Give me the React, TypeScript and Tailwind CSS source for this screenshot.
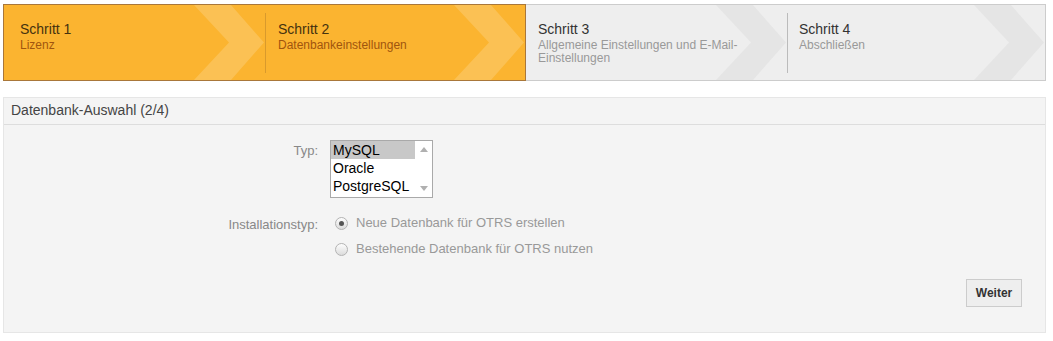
import React from "react";

type Step = {
  title: string;
  sub: string;
  active: boolean;
  width: string;
  border: string;
  pad: string;
  sep: boolean;
};

const steps: Step[] = [
  { title: "Schritt 1", sub: "Lizenz", active: true, width: "w-[262px]", border: "border-y border-l border-[#a9773a]", pad: "pl-[16px]", sep: false },
  { title: "Schritt 2", sub: "Datenbankeinstellungen", active: true, width: "w-[261px]", border: "border-y border-r border-[#a9773a]", pad: "pl-[12px]", sep: true },
  { title: "Schritt 3", sub: "Allgemeine Einstellungen und E-Mail-Einstellungen", active: false, width: "w-[261px]", border: "border-y border-[#cccccc]", pad: "pl-[12px]", sep: false },
  { title: "Schritt 4", sub: "Abschließen", active: false, width: "w-[259px]", border: "border-y border-r border-[#cccccc]", pad: "pl-[11px]", sep: true },
];

function Chevron({ fill }: { fill: string }) {
  return (
    <svg
      className="absolute right-0 top-0 h-full w-[71px]"
      viewBox="0 0 71 75"
      preserveAspectRatio="none"
    >
      <polygon points="0,0 37,0 70,37.5 37,75 0,75 35,37.5" fill={fill} />
    </svg>
  );
}

function StepItem({ step }: { step: Step }) {
  return (
    <div
      className={`relative h-[77px] shrink-0 ${step.width} ${step.border} ${
        step.active ? "bg-[#fbb430]" : "bg-[#eeeeee]"
      }`}
    >
      <Chevron fill={step.active ? "#fbc154" : "#e5e5e5"} />
      <div
        className={`relative mt-[8px] h-[60px] ${step.pad} pt-[8px] ${
          step.sep
            ? step.active
              ? "border-l border-[#d99a2c]"
              : "border-l border-[#bbbbbb]"
            : ""
        }`}
      >
        <div
          className={`text-[14px] leading-[17px] ${
            step.active ? "text-[#45320f]" : "text-[#333333]"
          }`}
        >
          {step.title}
        </div>
        <div
          className={`mt-[1px] w-[215px] text-[12px] leading-[13px] ${
            step.active ? "text-[#a0550e]" : "text-[#999999]"
          }`}
        >
          {step.sub}
        </div>
      </div>
    </div>
  );
}

function Radio({ checked }: { checked: boolean }) {
  return (
    <span className="flex h-[13px] w-[13px] items-center justify-center rounded-full border border-[#b3b3b3] bg-gradient-to-b from-[#fdfdfd] to-[#dcdcdc]">
      {checked && <span className="h-[5px] w-[5px] rounded-full bg-[#555555]" />}
    </span>
  );
}

export default function App() {
  const options = ["MySQL", "Oracle", "PostgreSQL"];
  return (
    <div
      className="min-h-[341px] bg-white pt-[4px] pl-[3px]"
      style={{ fontFamily: '"Liberation Sans", Arial, sans-serif' }}
    >
      <div className="flex w-[1043px]">
        {steps.map((s) => (
          <StepItem key={s.title} step={s} />
        ))}
      </div>

      <div className="mt-[16px] h-[236px] w-[1043px] border border-[#e6e6e6] bg-[#f4f4f4]">
        <div className="h-[27px] border-b border-[#dddddd] pl-[7px] pt-[4px] text-[14px] leading-[17px] text-[#444444]">
          Datenbank-Auswahl (2/4)
        </div>

        <div className="grid grid-cols-[314px_1fr] gap-x-[12px] pt-[15px]">
          <div className="pt-[3px] text-right text-[13px] leading-[16px] text-[#888888]">
            Typ:
          </div>
          <div className="flex h-[58px] w-[103px] border border-[#a9a9a9] bg-white">
            <div className="flex-1">
              {options.map((o, i) => (
                <div
                  key={o}
                  className={`h-[18px] pl-[2px] text-[14px] leading-[18px] text-black ${
                    i === 0 ? "bg-[#c8c8c8]" : ""
                  }`}
                >
                  {o}
                </div>
              ))}
            </div>
            <div className="flex w-[17px] flex-col items-center justify-between py-[6px]">
              <svg width="8" height="5" viewBox="0 0 8 5">
                <polygon points="0,5 8,5 4,0" fill="#b0b0b0" />
              </svg>
              <svg width="8" height="5" viewBox="0 0 8 5">
                <polygon points="0,0 8,0 4,5" fill="#b0b0b0" />
              </svg>
            </div>
          </div>

          <div className="pt-[19px] text-right text-[13px] leading-[16px] text-[#888888]">
            Installationstyp:
          </div>
          <div className="flex flex-col gap-[10px] pt-[17px] pl-[5px]">
            <label className="flex items-center gap-[8px] text-[13px] leading-[16px] text-[#999999]">
              <Radio checked />
              Neue Datenbank für OTRS erstellen
            </label>
            <label className="flex items-center gap-[8px] text-[13px] leading-[16px] text-[#999999]">
              <Radio checked={false} />
              Bestehende Datenbank für OTRS nutzen
            </label>
          </div>
        </div>

        <div className="flex justify-end pr-[23px] pt-[22px]">
          <button className="h-[28px] w-[56px] border border-[#cccccc] bg-[#eeeeee] text-[12px] font-bold text-[#333333]">
            Weiter
          </button>
        </div>
      </div>
    </div>
  );
}
